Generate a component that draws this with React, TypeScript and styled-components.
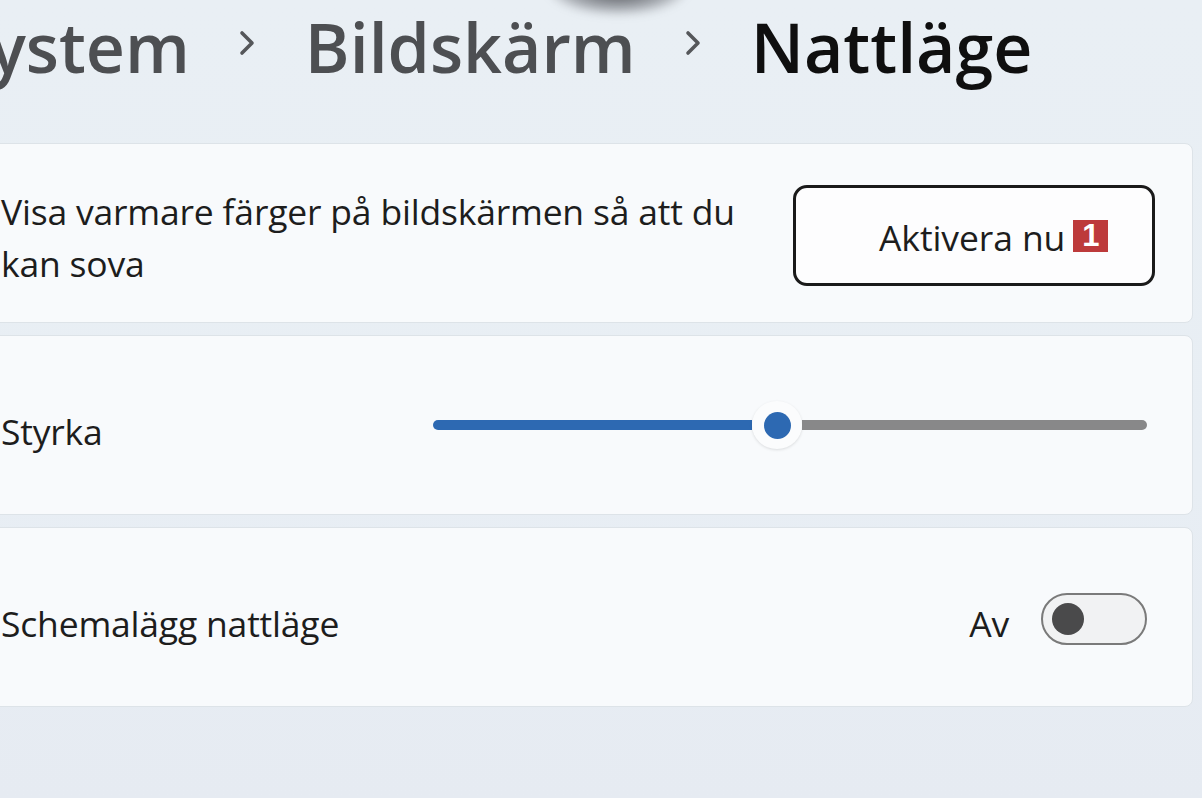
import React from "react";
import styled, { createGlobalStyle } from "styled-components";

const Global = createGlobalStyle`
  html, body {
    margin: 0;
    padding: 0;
    background: #e8eef4;
    overflow: hidden;
  }
  body {
    font-family: "Open Sans", "Noto Sans", sans-serif;
    color: #1b1b1b;
  }
`;

const Page = styled.div`
  position: relative;
  width: 1202px;
  height: 798px;
  overflow: hidden;
  background: linear-gradient(#e9eff4, #e8eef4 60%, #e6ebf2);
`;

const Content = styled.div`
  margin-left: -40px;
  width: 1233px;
  display: flex;
  flex-direction: column;
`;

const Breadcrumb = styled.h1`
  margin: 0 0 0 -8px;
  height: 143px;
  display: flex;
  align-items: flex-start;
  padding-top: 0;
  font-size: 68px;
  font-weight: 600;
  line-height: normal;
  letter-spacing: 0;
  box-sizing: border-box;
`;

const Crumb = styled.span<{ $current?: boolean }>`
  color: ${(p) => (p.$current ? "#0f0f0f" : "#4d4f52")};
`;

const Chevron = styled.span`
  display: inline-flex;
  align-items: center;
  justify-content: center;
  width: 115px;
  height: 86px;
  color: #55575a;
`;

const Cards = styled.div`
  display: flex;
  flex-direction: column;
  gap: 12px;
`;

const Card = styled.div<{ $pr: number }>`
  height: 180px;
  box-sizing: border-box;
  background: #f8fafc;
  border: 1px solid #dde3e8;
  border-radius: 8px;
  display: flex;
  align-items: center;
  justify-content: space-between;
  padding-left: 40px;
  padding-right: ${(p) => p.$pr}px;
`;

const Label = styled.div`
  font-size: 35.5px;
  line-height: 52px;
  color: #1d1d1d;
  letter-spacing: -0.2px;
  margin-top: 12px;
`;

const Description = styled(Label)`
  width: 760px;
  margin-top: 8px;
`;

const ActionButton = styled.button`
  width: 362px;
  height: 101px;
  box-sizing: border-box;
  border: 3px solid #1a1a1a;
  border-radius: 14px;
  background: #fdfdfe;
  display: flex;
  align-items: center;
  justify-content: flex-start;
  padding: 4px 0 0 83px;
  gap: 8px;
  font-family: "Open Sans", "Noto Sans", sans-serif;
  font-size: 35.5px;
  color: #1d1d1d;
  letter-spacing: -0.1px;
  margin-top: 4px;
`;

const Badge = styled.span`
  display: inline-flex;
  flex: none;
  align-items: center;
  justify-content: center;
  width: 35px;
  height: 32px;
  margin-top: -2px;
  background: #bd3a3b;
  color: #fff;
  font-family: "Liberation Sans", Arial, sans-serif;
  font-weight: 700;
  font-size: 31px;
  line-height: 32px;
  letter-spacing: 0;
`;

const Slider = styled.div`
  position: relative;
  width: 714px;
  height: 48px;
  display: flex;
  align-items: center;
`;

const TrackFill = styled.div`
  height: 10px;
  border-radius: 5px 0 0 5px;
  background: #2d69b2;
`;

const TrackRest = styled.div`
  flex: 1;
  height: 10px;
  border-radius: 0 5px 5px 0;
  background: #888889;
`;

const Thumb = styled.div`
  width: 50px;
  height: 48px;
  flex: none;
  border-radius: 50%;
  background: #fbfcfd;
  box-shadow: 0 1px 3px rgba(0, 0, 0, 0.12);
  display: flex;
  align-items: center;
  justify-content: center;
  &::after {
    content: "";
    width: 27px;
    height: 27px;
    border-radius: 50%;
    background: #2d69b2;
  }
`;

const ToggleGroup = styled.div`
  display: flex;
  align-items: center;
  gap: 32px;
`;

const Toggle = styled.div`
  width: 106px;
  height: 52px;
  box-sizing: border-box;
  border: 2px solid #7a7a7a;
  border-radius: 26px;
  background: #f1f2f3;
  display: flex;
  align-items: center;
  padding-left: 9px;
  margin-top: 4px;
  &::before {
    content: "";
    width: 32px;
    height: 32px;
    border-radius: 50%;
    background: #4a4a4b;
  }
`;

const CursorBlur = styled.div`
  position: absolute;
  left: 548px;
  top: -40px;
  width: 140px;
  height: 55px;
  border-radius: 50%;
  background: radial-gradient(ellipse at center, rgba(40, 42, 48, 0.85), rgba(80, 82, 90, 0.4) 55%, rgba(200, 205, 212, 0) 75%);
  filter: blur(4px);
`;

const ChevronIcon = () => (
  <svg width="20" height="28" viewBox="0 0 20 28" fill="none">
    <path d="M5 4 L15 14 L5 24" stroke="#55575a" strokeWidth="3.6" strokeLinecap="round" strokeLinejoin="round" />
  </svg>
);

export default function App() {
  const fill = 319;
  return (
    <Page>
      <Global />
      <Content>
        <Breadcrumb>
          <Crumb>System</Crumb>
          <Chevron>
            <ChevronIcon />
          </Chevron>
          <Crumb>Bildskärm</Crumb>
          <Chevron>
            <ChevronIcon />
          </Chevron>
          <Crumb $current>Nattläge</Crumb>
        </Breadcrumb>
        <Cards>
          <Card $pr={37}>
            <Description>Visa varmare färger på bildskärmen så att du kan sova</Description>
            <ActionButton>
              Aktivera nu
              <Badge>1</Badge>
            </ActionButton>
          </Card>
          <Card $pr={45}>
            <Label>Styrka</Label>
            <Slider>
              <TrackFill style={{ width: `${fill}px` }} />
              <Thumb />
              <TrackRest />
            </Slider>
          </Card>
          <Card $pr={45}>
            <Label>Schemalägg nattläge</Label>
            <ToggleGroup>
              <Label>Av</Label>
              <Toggle />
            </ToggleGroup>
          </Card>
        </Cards>
      </Content>
      <CursorBlur />
    </Page>
  );
}
